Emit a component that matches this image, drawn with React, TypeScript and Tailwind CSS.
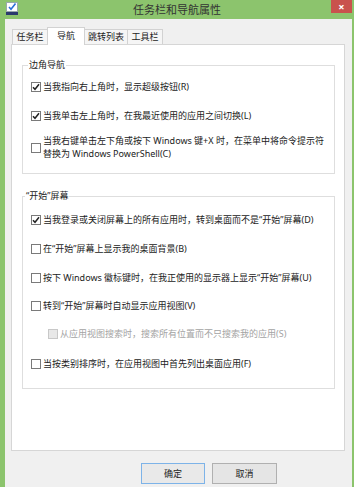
import React from "react";

const FONT = { fontFamily: '"Noto Sans", "Noto Sans CJK SC", sans-serif' };

function Box({ checked, disabled }: { checked?: boolean; disabled?: boolean }) {
  return (
    <span
      className={
        "flex h-[10px] w-[10px] shrink-0 items-center justify-center border " +
        (disabled ? "border-[#c8c8c8] bg-[#e8e8e8]" : "border-[#7a7a7a] bg-white")
      }
    >
      {checked && (
        <svg width="8" height="8" viewBox="0 0 8 8">
          <path d="M1 4.2 L3 6.3 L7 1.3" fill="none" stroke="#222" strokeWidth="1.5" />
        </svg>
      )}
    </span>
  );
}

function Row({
  checked,
  disabled,
  children,
  className = "",
}: {
  checked?: boolean;
  disabled?: boolean;
  children: React.ReactNode;
  className?: string;
}) {
  return (
    <div className={"flex items-center gap-[2px] " + className}>
      <Box checked={checked} disabled={disabled} />
      <span className={"whitespace-nowrap " + (disabled ? "text-[#a3a3a3]" : "text-[#222]")}>{children}</span>
    </div>
  );
}

export default function App() {
  return (
    <div
      className="flex h-[487px] w-[354px] flex-col overflow-hidden bg-[#8cc46d] text-[9px] leading-[12px]"
      style={FONT}
    >
      {/* title bar */}
      <div className="flex h-[19px] shrink-0 items-start">
        <div className="w-[40px] pl-[6px] pt-[2px]">
          <svg width="12" height="13" viewBox="0 0 12 13">
            <rect x="0.5" y="0.5" width="11" height="9" fill="#fff" stroke="#9aa" />
            <path d="M3 5 L5 7.3 L9.5 1.5" fill="none" stroke="#2a6fd6" strokeWidth="1.6" />
            <rect x="0" y="10" width="12" height="3" fill="#2b3a6e" />
          </svg>
        </div>
        <div className="flex-1 pt-[3px] text-center text-[11px] leading-[14px] text-[#333]">任务栏和导航属性</div>
        <div className="flex w-[40px] justify-end pr-[2px]">
          <div className="flex h-[13px] w-[21px] items-center justify-center bg-[#c9524d] text-[11px] font-bold leading-[13px] text-white">
            ×
          </div>
        </div>
      </div>

      {/* body */}
      <div className="ml-[5px] mr-[2px] flex flex-1 flex-col bg-[#f0f0f0]">
        {/* tabs */}
        <div className="relative z-10 ml-[7px] mt-[8px] flex h-[17px] items-end text-[#222]">
          <div className="flex h-[15px] w-[35px] items-center justify-center border-l border-t border-[#d2d2d2] bg-[#f5f5f5]">
            任务栏
          </div>
          <div className="-mb-px flex h-[18px] w-[38px] items-start justify-center border-x border-t border-[#d2d2d2] bg-white pt-[2px]">
            导航
          </div>
          <div className="flex h-[15px] w-[43px] items-center justify-center border-r border-t border-[#d2d2d2] bg-[#f5f5f5]">
            跳转列表
          </div>
          <div className="flex h-[15px] w-[35px] items-center justify-center border-r border-t border-[#d2d2d2] bg-[#f5f5f5]">
            工具栏
          </div>
        </div>

        {/* panel */}
        <div className="ml-[6px] mr-[7px] flex-1 border border-[#d6d6d6] bg-white pl-[10px] pr-[9px] pt-[20px]">
          {/* group 1 */}
          <div className="relative border border-[#dedede] pb-[13px] pl-[8px] pt-[15px]">
            <span className="absolute left-[5px] top-[-7px] bg-white px-[1px] leading-[12px] text-[#222]">边角导航</span>
            <Row checked>当我指向右上角时，显示超级按钮(R)</Row>
            <Row checked className="mt-[17px]">
              当我单击左上角时，在我最近使用的应用之间切换(L)
            </Row>
            <div className="mt-[13px] flex items-center gap-[2px]">
              <Box />
              <span className="whitespace-nowrap leading-[12.5px] text-[#222]">
                当我右键单击左下角或按下 Windows 键+X 时，在菜单中将命令提示符
                <br />
                替换为 Windows PowerShell(C)
              </span>
            </div>
          </div>

          {/* group 2 */}
          <div className="relative mt-[22px] border border-[#dedede] pb-[18px] pl-[8px] pt-[17px]">
            <span className="absolute left-[2px] top-[-7px] bg-white px-[1px] leading-[12px] text-[#222]">“开始”屏幕</span>
            <Row checked>当我登录或关闭屏幕上的所有应用时，转到桌面而不是“开始”屏幕(D)</Row>
            <Row className="mt-[17px]">在“开始”屏幕上显示我的桌面背景(B)</Row>
            <Row className="mt-[17px]">按下 Windows 徽标键时，在我正使用的显示器上显示“开始”屏幕(U)</Row>
            <Row className="mt-[16px]">转到“开始”屏幕时自动显示应用视图(V)</Row>
            <Row disabled className="ml-[17px] mt-[16px]">
              从应用视图搜索时，搜索所有位置而不只搜索我的应用(S)
            </Row>
            <Row className="mt-[18px]">当按类别排序时，在应用视图中首先列出桌面应用(F)</Row>
          </div>
        </div>

        {/* buttons */}
        <div className="mb-[3px] mt-[12px] flex h-[21px] gap-[7px] pl-[136px] text-[#222]">
          <div className="flex w-[64px] items-center justify-center border border-[#7db3e8] bg-[#e9e9e9]">确定</div>
          <div className="flex w-[65px] items-center justify-center border border-[#b0b0b0] bg-[#e5e5e5]">取消</div>
        </div>
      </div>
    </div>
  );
}
